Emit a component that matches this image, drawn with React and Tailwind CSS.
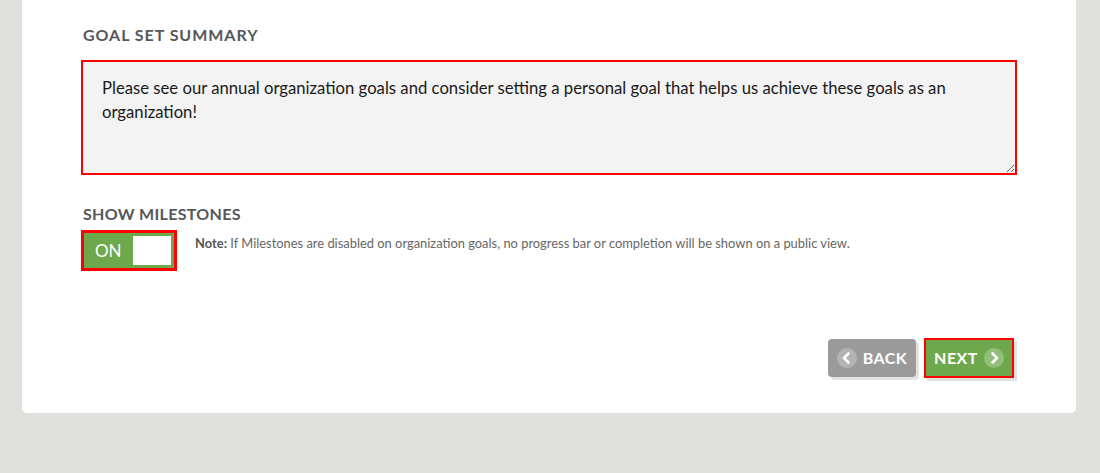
import React, { useState } from "react";

const Chevron = ({ dir }) => (
  <svg viewBox="0 0 20 20" className="w-[20px] h-[20px]">
    <circle cx="10" cy="10" r="10" fill="rgba(255,255,255,0.25)" />
    <path
      d={dir === "left" ? "M11.5 5.5 L7 10 L11.5 14.5" : "M8.5 5.5 L13 10 L8.5 14.5"}
      fill="none"
      stroke="#fff"
      strokeWidth="2.6"
      strokeLinecap="round"
      strokeLinejoin="round"
    />
  </svg>
);

const App = () => {
  const [summary, setSummary] = useState(
    "Please see our annual organization goals and consider setting a personal goal that helps us achieve these goals as an organization!"
  );
  const [milestones, setMilestones] = useState(true);

  return (
    <div className="min-h-[473px] bg-[#e0e0dc] px-[22px] font-['Lato',sans-serif]">
      <div className="w-[1054px] bg-white rounded-b-[5px] pl-[59px] pr-[59px] pt-[25px] pb-[35px]">
        {/* Summary */}
        <h2 className="pl-[2px] text-[16px] font-bold tracking-[0.06em] text-[#555759] leading-[20px]">
          GOAL SET SUMMARY
        </h2>
        <textarea
          value={summary}
          onChange={(e) => setSummary(e.target.value)}
          className="mt-[15px] block w-[936px] h-[115px] bg-[#f3f3f3] border-[2px] border-[#ff0000] px-[19px] py-[14px] text-[16.7px] leading-[24px] text-[#1a1a1a] outline-none resize-y"
        />

        {/* Milestones */}
        <h3 className="mt-[29px] pl-[2px] text-[16px] font-bold tracking-[0.02em] text-[#555759] leading-[20px]">
          SHOW MILESTONES
        </h3>
        <div className="mt-[6px] flex items-start gap-[18px]">
          <button
            onClick={() => setMilestones(!milestones)}
            className="w-[96px] h-[41px] border-[3px] border-[#ff0000] bg-[#6ea84d] flex items-center justify-between pl-[11px] pr-[3px]"
          >
            <span className="text-white text-[17px] leading-none">{milestones ? "ON" : "OFF"}</span>
            <span className="w-[38px] h-[29px] bg-white"></span>
          </button>
          <p className="mt-[4px] text-[12.9px] text-[#666] leading-[18px]">
            <span className="font-bold text-[#555]">Note:</span> If Milestones are disabled on
            organization goals, no progress bar or completion will be shown on a public view.
          </p>
        </div>

        {/* Actions */}
        <div className="mt-[67px] flex justify-end gap-[8px] pr-[3px]">
          <button className="w-[88px] h-[38px] mt-[1px] rounded-[4px] bg-[#9a9a9a] shadow-[3px_3px_0_#e2e2de] flex items-center justify-center gap-[6px] text-white text-[16px] font-bold tracking-[0.03em]">
            <Chevron dir="left" />
            BACK
          </button>
          <button className="w-[90px] h-[40px] border-[2px] border-[#ff0000] bg-[#6ea84d] shadow-[3px_3px_0_#e2e2de] flex items-center justify-center gap-[6px] text-white text-[16px] font-bold tracking-[0.03em]">
            NEXT
            <Chevron dir="right" />
          </button>
        </div>
      </div>
    </div>
  );
};

export default App;
